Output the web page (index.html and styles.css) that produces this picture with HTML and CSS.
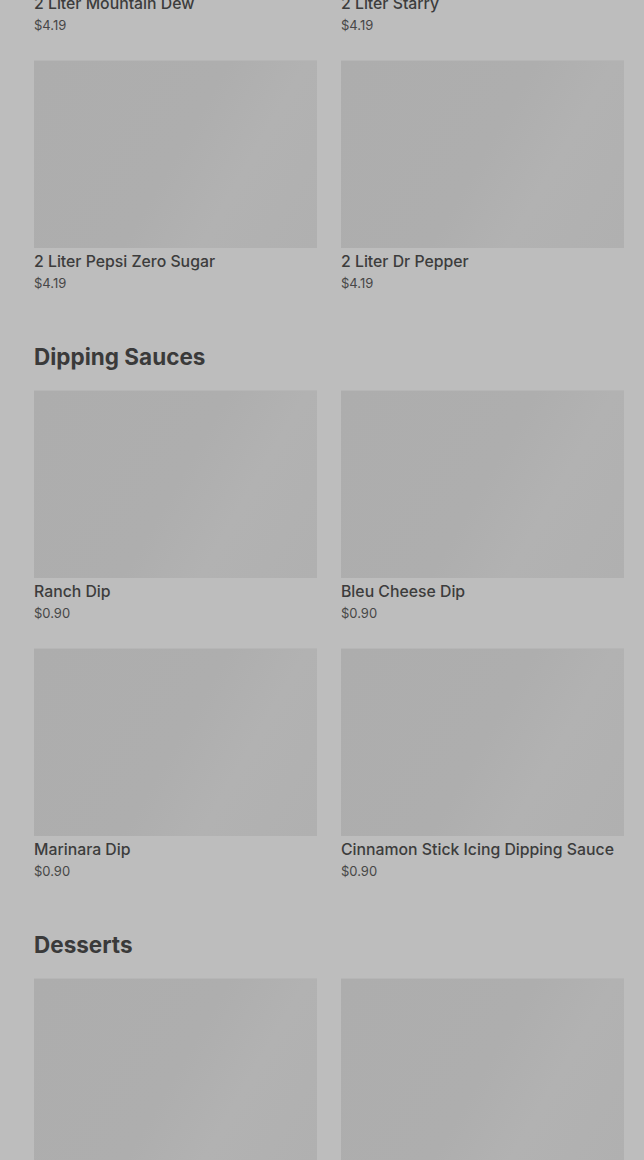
FILE: index.html
```html
<!DOCTYPE html>
<html lang="en">
<head>
  <meta charset="UTF-8" />
  <meta name="viewport" content="width=device-width, initial-scale=1.0"/>
  <title>Menu</title>
  <link rel="stylesheet" href="styles.css">
</head>
<body>
  <main class="menu">
    <section class="menu-section">
      <div class="item-grid">
        <div class="item"><div class="item-img"></div><div class="item-name">2 Liter Mountain Dew</div><div class="item-price">$4.19</div></div>
        <div class="item"><div class="item-img"></div><div class="item-name">2 Liter Starry</div><div class="item-price">$4.19</div></div>
        <div class="item"><div class="item-img"></div><div class="item-name">2 Liter Pepsi Zero Sugar</div><div class="item-price">$4.19</div></div>
        <div class="item"><div class="item-img"></div><div class="item-name">2 Liter Dr Pepper</div><div class="item-price">$4.19</div></div>
      </div>
    </section>

    <section class="menu-section">
      <h2 class="section-title">Dipping Sauces</h2>
      <div class="item-grid">
        <div class="item"><div class="item-img"></div><div class="item-name">Ranch Dip</div><div class="item-price">$0.90</div></div>
        <div class="item"><div class="item-img"></div><div class="item-name">Bleu Cheese Dip</div><div class="item-price">$0.90</div></div>
        <div class="item"><div class="item-img"></div><div class="item-name">Marinara Dip</div><div class="item-price">$0.90</div></div>
        <div class="item"><div class="item-img"></div><div class="item-name">Cinnamon Stick Icing Dipping Sauce</div><div class="item-price">$0.90</div></div>
      </div>
    </section>

    <section class="menu-section">
      <h2 class="section-title">Desserts</h2>
      <div class="item-grid">
        <div class="item"><div class="item-img"></div><div class="item-name">Cinnamon Sticks</div><div class="item-price">$5.49</div></div>
        <div class="item"><div class="item-img"></div><div class="item-name">Brownie</div><div class="item-price">$5.49</div></div>
      </div>
    </section>
  </main>
</body>
</html>
```

FILE: styles.css
```css
body {
  margin: 0;
  background-color: #bdbdbd;
  color: #3b3b3b;
  font-family: Inter, 'Liberation Sans', sans-serif;
  overflow: hidden;
}
.menu {
  margin-top: -198px;
  padding: 0 20px 0 34px;
}
.section-title {
  font-size: 22.5px;
  line-height: 28px;
  font-weight: 700;
  color: #3a3a3a;
  margin: 51px 0 19px;
}
.item-grid {
  display: grid;
  grid-template-columns: 1fr 1fr;
  column-gap: 24px;
  row-gap: 26px;
}
.item-img {
  height: 188px;
  background: linear-gradient(120deg, #adadad 0%, #aeaeae 50%, #b2b2b2 70%, #b0b0b0 100%);
  border-top: 1px solid #b6b6b6;
  box-sizing: border-box;
}
.item-name {
  margin-top: 5px;
  font-size: 15.8px;
  line-height: 18px;
  font-weight: 500;
  color: #3c3c3c;
  white-space: nowrap;
}
.item-price {
  margin-top: 3px;
  font-size: 13px;
  line-height: 18px;
  color: #474747;
}
```
